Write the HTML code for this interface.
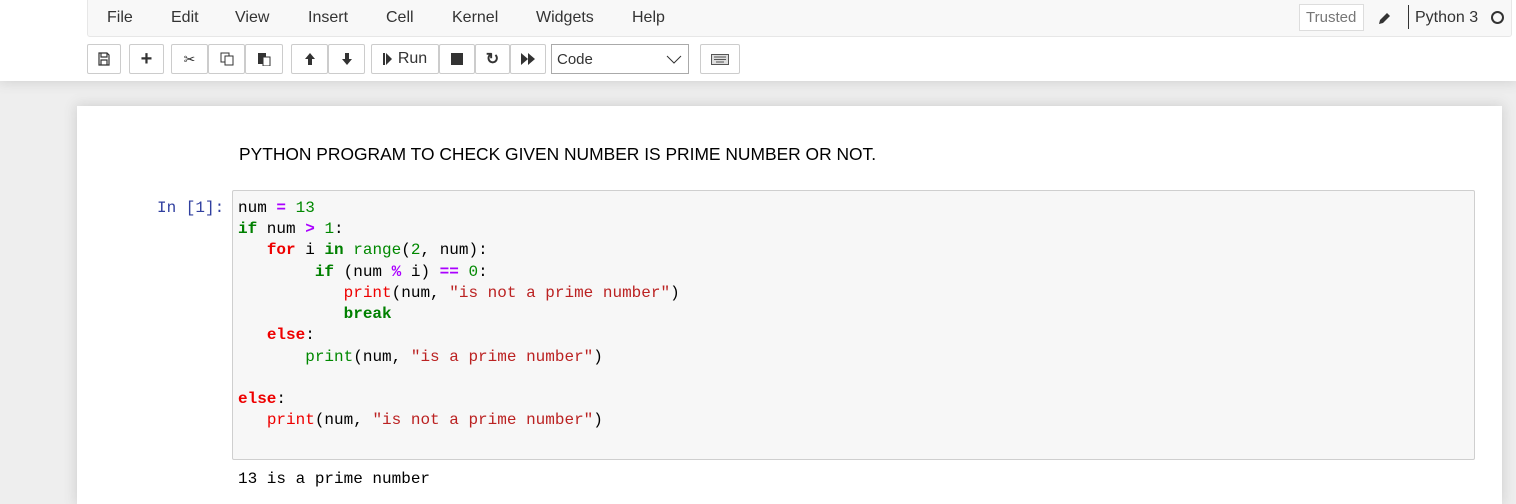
<!DOCTYPE html>
<html><head><style>
*{box-sizing:border-box;margin:0;padding:0}
html,body{width:1516px;height:504px;overflow:hidden}
body{background:#eeeeee;font-family:"Liberation Sans",sans-serif;position:relative}
#hdr{position:absolute;left:0;top:0;width:1516px;height:81px;background:#fff;box-shadow:0 0 12px 1px rgba(87,87,87,0.2)}
#menu{position:absolute;left:87px;top:-1px;width:1425px;height:38px;background:#f8f8f8;border:1px solid #e7e7e7;border-radius:0 0 3px 3px}
.mi{position:absolute;top:9px;font-size:16px;color:#333}
.btn{position:absolute;top:44px;height:30px;background:#fff;border:1px solid #ccc;border-radius:2px;display:flex;align-items:center;justify-content:center;color:#333;font-size:16px}
#nb{position:absolute;left:77px;top:106px;width:1425px;height:398px;background:#fff;box-shadow:0 0 12px 1px rgba(87,87,87,0.2)}
.code{position:absolute;left:232px;top:190px;width:1243px;height:270px;background:#f7f7f7;border:1px solid #cfcfcf;border-radius:2px}
.ln{position:absolute;left:238px;font-family:"Liberation Mono",monospace;font-size:16px;white-space:pre;color:#000;line-height:21px}
.k{color:#008000;font-weight:bold}.r{color:#e00;font-weight:bold}.p{color:#a0f;font-weight:bold}.n{color:#080}.s{color:#b22}.f{color:#080}.fr{color:#e00}
</style></head><body>
<div id="hdr">
<div id="menu">
<span class="mi" style="left:19px">File</span><span class="mi" style="left:83px">Edit</span><span class="mi" style="left:147px">View</span><span class="mi" style="left:220px">Insert</span><span class="mi" style="left:298px">Cell</span><span class="mi" style="left:364px">Kernel</span><span class="mi" style="left:448px">Widgets</span><span class="mi" style="left:544px">Help</span>
<span style="position:absolute;left:1211px;top:4px;height:27px;width:65px;border:1px solid #ddd;background:#fff;color:#777;font-size:15px;padding:4px 0 0 6px">Trusted</span>
<svg style="position:absolute;left:1290px;top:11px" width="14" height="14" viewBox="0 0 14 14"><path d="M1 13 L2 9 L9 2 L12 5 L5 12 Z" fill="#333"/></svg>
<span style="position:absolute;left:1320px;top:5px;width:1px;height:24px;background:#333"></span>
<span class="mi" style="left:1327px;top:9px">Python 3</span>
<span style="position:absolute;left:1403px;top:11px;width:13px;height:13px;border:2px solid #333;border-radius:50%"></span>
</div>
<div class="btn" style="left:87px;width:34px"><svg width="12" height="14" viewBox="0 0 12 14"><path d="M1 1h8l2 2v10H1z M3 1v4h6V1 M3 8h6v5H3z" fill="none" stroke="#333" stroke-width="1.2"/></svg></div>
<div class="btn" style="left:129px;width:35px;font-weight:bold;font-size:20px">+</div>
<div class="btn" style="left:171px;width:37px;font-size:14px">✂</div>
<div class="btn" style="left:208px;width:37px"><svg width="14" height="14"><rect x="1" y="1" width="8" height="9" fill="none" stroke="#333"/><rect x="5" y="4" width="8" height="9" fill="#fff" stroke="#333"/></svg></div>
<div class="btn" style="left:245px;width:38px"><svg width="14" height="14"><rect x="1" y="1" width="8" height="11" fill="#333"/><rect x="6" y="5" width="7" height="9" fill="#fff" stroke="#333"/></svg></div>
<div class="btn" style="left:291px;width:37px"><svg width="12" height="14"><path d="M6 1L1 7h3v6h4V7h3Z" fill="#333"/></svg></div>
<div class="btn" style="left:328px;width:37px"><svg width="12" height="14"><path d="M6 13L1 7h3V1h4v6h3Z" fill="#333"/></svg></div>
<div class="btn" style="left:371px;width:68px;font-size:16px"><svg width="10" height="12" style="margin-right:5px"><rect x="0" y="0" width="2" height="12" fill="#333"/><path d="M3 0L9 6L3 12Z" fill="#333"/></svg>Run</div>
<div class="btn" style="left:439px;width:36px"><span style="width:12px;height:12px;background:#333"></span></div>
<div class="btn" style="left:475px;width:35px;font-weight:bold">↻</div>
<div class="btn" style="left:510px;width:36px"><svg width="14" height="12"><path d="M0 0L7 6L0 12Z M7 0L14 6L7 12Z" fill="#333"/></svg></div>
<div class="btn" style="left:551px;width:138px;justify-content:space-between;padding:0 6px 0 5px;border-radius:0;border-color:#aaa"><span style="font-size:15px">Code</span><svg width="16" height="10"><path d="M1 2L8 9L15 2" fill="none" stroke="#333"/></svg></div>
<div class="btn" style="left:700px;width:40px"><svg width="18" height="11"><rect x="0.5" y="0.5" width="17" height="10" fill="#ddd" stroke="#555"/><path d="M3 3h12M3 5.5h12M5 8h8" stroke="#555"/></svg></div>
</div>
<div id="nb"></div>
<div style="position:absolute;left:239px;top:144px;font-size:17.4px;color:#000">PYTHON PROGRAM TO CHECK GIVEN NUMBER IS PRIME NUMBER OR NOT.</div>
<div style="position:absolute;left:157px;top:198px;font-family:'Liberation Mono',monospace;font-size:16px;color:#303f9f;line-height:21px">In [1]:</div>
<div class="code"></div>
<div class="ln" style="top:198px">num <span class="p">=</span> <span class="n">13</span></div>
<div class="ln" style="top:219px"><span class="k">if</span> num <span class="p">&gt;</span> <span class="n">1</span>:</div>
<div class="ln" style="top:240px">   <span class="r">for</span> i <span class="k">in</span> <span class="f">range</span>(<span class="n">2</span>, num):</div>
<div class="ln" style="top:262px">        <span class="k">if</span> (num <span class="p">%</span> i) <span class="p">==</span> <span class="n">0</span>:</div>
<div class="ln" style="top:283px">           <span class="fr">print</span>(num, <span class="s">"is not a prime number"</span>)</div>
<div class="ln" style="top:304px">           <span class="k">break</span></div>
<div class="ln" style="top:325px">   <span class="r">else</span>:</div>
<div class="ln" style="top:347px">       <span class="f">print</span>(num, <span class="s">"is a prime number"</span>)</div>
<div class="ln" style="top:389px"><span class="r">else</span>:</div>
<div class="ln" style="top:410px">   <span class="fr">print</span>(num, <span class="s">"is not a prime number"</span>)</div>
<div class="ln" style="top:469px">13 is a prime number</div>
</body></html>
